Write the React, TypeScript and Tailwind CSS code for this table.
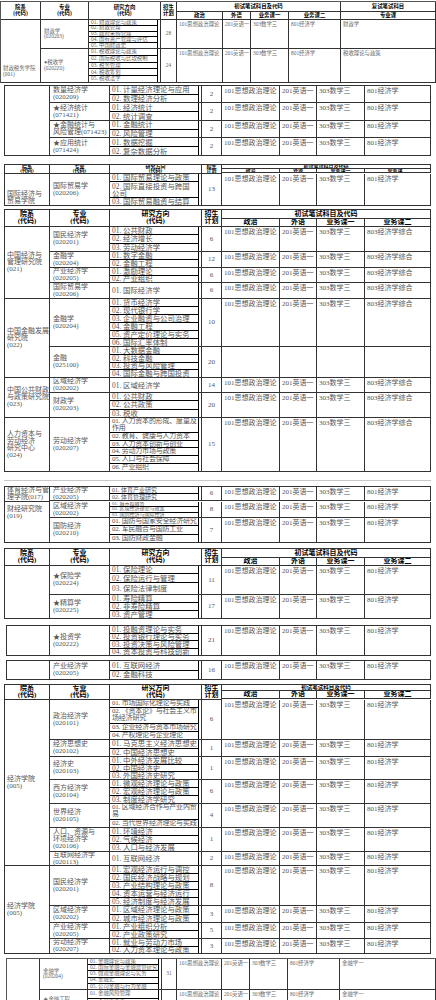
import React from 'react';

type Dir = { t: string; g?: string };
type Spec = { n: string; d: Dir[]; p: string; e: string[]; h: string; dt?: string };
type Group = { dept?: string; da?: string; specs: Spec[] };

const FONT = "font-['Liberation_Serif','Noto_Sans_CJK_SC',serif]";
const B = 'border-[#333]';

// 列宽
const W1 = ['w-[40px]', 'w-[48px]', 'w-[72px]', 'w-[16px]', 'w-[46px]', 'w-[28px]', 'w-[38px]', 'w-[52px]', 'w-[95px]'];
const WM = ['w-[45px]', 'w-[60px]', 'w-[92px]', 'w-[20px]', 'w-[58px]', 'w-[37px]', 'w-[48px]', 'w-[66px]'];
const W10 = ['w-[33px]', 'w-[48px]', 'w-[74px]', 'w-[15px]', 'w-[45px]', 'w-[28px]', 'w-[38px]', 'w-[52px]', 'w-[96px]'];

const HEAD = ['院系\n(代码)', '专业\n(代码)', '研究方向\n(代码)', '招生\n计划'];
const EX3 = ['101思想政治理论', '201英语一', '303数学三', '803经济学综合'];
const EX1 = ['101思想政治理论', '201英语一', '303数学三', '801经济学'];

const d = (...xs: string[]): Dir[] => xs.map((t) => (t.includes('\n') ? { t, g: 'flex-[2]' } : { t }));

const Header = ({ w, h1, h2, txt, t1, extra }: { w: string[]; h1: string; h2: string; txt: string; t1?: string; extra?: boolean }) => {
  const cell = `shrink-0 border-r border-b ${B} flex items-center justify-center text-center overflow-hidden`;
  return (
    <div className={`flex font-bold text-black ${txt}`}>
      {HEAD.map((t, i) => (
        <div key={t} className={`${w[i]} ${cell} whitespace-pre-line`}>{t}</div>
      ))}
      <div className="flex flex-col">
        <div className={`${h1} ${cell} ${t1 ?? ''}`}>初试笔试科目及代码</div>
        <div className={`${h2} flex`}>
          {['政治', '外语', '业务课一', '业务课二'].map((t, i) => (
            <div key={t} className={`${w[4 + i]} ${cell}`}>{t}</div>
          ))}
        </div>
      </div>
      {extra && (
        <div className="flex flex-col">
          <div className={`${h1} ${w[8]} ${cell}`}>复试笔试科目</div>
          <div className={`${h2} ${w[8]} ${cell}`}>专业课</div>
        </div>
      )}
    </div>
  );
};

const Body = ({ w, groups, txt, dirTxt }: { w: string[]; groups: Group[]; txt: string; dirTxt: string }) => (
  <div className={`flex flex-col ${txt}`}>
    {groups.map((g, gi) => (
      <div key={gi} className="flex">
        <div className={`${w[0]} shrink-0 border-r border-b ${B} flex ${g.da ?? 'items-center'} overflow-hidden pl-[2px] whitespace-pre-line`}>
          <span>{g.dept}</span>
        </div>
        <div className="flex flex-col">
          {g.specs.map((s, si) => (
            <div key={si} className={`flex ${s.h}`}>
              <div className={`${w[1]} shrink-0 border-r border-b ${B} flex items-center pl-[3px] whitespace-pre-line overflow-hidden`}>{s.n}</div>
              <div className={`${w[2]} shrink-0 border-r border-b ${B} flex flex-col pr-[2px] ${s.dt ?? dirTxt}`}>
                {s.d.map((x, di) => (
                  <div
                    key={di}
                    className={`${x.g ?? 'flex-1'} min-h-0 flex items-center pl-[2px] whitespace-pre overflow-hidden border-r border-black ${di < s.d.length - 1 ? 'border-b' : ''}`}
                  >
                    {x.t}
                  </div>
                ))}
              </div>
              <div className={`${w[3]} shrink-0 border-r border-b ${B} flex items-center justify-center`}>{s.p}</div>
              {s.e.map((e, ei) => (
                <div key={ei} className={`${w[4 + ei]} shrink-0 border-r border-b ${B} pl-[2px] pt-[2px] whitespace-nowrap overflow-hidden`}>{e}</div>
              ))}
            </div>
          ))}
        </div>
      </div>
    ))}
  </div>
);

const F1: Group[] = [
  {
    dept: '财政税务学院\n(001)',
    da: 'items-end pb-[5px]',
    specs: [
      { n: '财政学\n(020203)', d: d('01. 财政理论与政策', '02. 财政管理', '03. 政府采购管理', '04. 国有资产管理与评估', '05. 中国财政史'), p: '28', e: [...EX1, '财政学'], h: 'h-[29px]' },
      { n: '●税收学\n(0202Z0)', d: d('01. 税收理论与政策', '02. 国际税收与比较税制', '03. 税务管理', '04. 税收筹划', '05. 税收法学'), p: '24', e: [...EX1, '税收理论与政策'], h: 'h-[34px]' },
    ],
  },
];

const F2: Group[] = [
  {
    specs: [
      { n: '数量经济学\n(020209)', d: d('01. 计量经济理论与应用', '02. 数理经济分析'), p: '2', e: EX1, h: 'h-[17px]' },
      { n: '★经济统计\n(071421)', d: d('01. 经济统计', '02. 统计调查'), p: '2', e: EX1, h: 'h-[18px]' },
      { n: '★金融统计与\n风险管理(071423)', d: d('01. 金融统计', '02. 风险管理'), p: '2', e: EX1, h: 'h-[17px]' },
      { n: '★应用统计\n(071424)', d: d('01. 数据挖掘', '02. 复杂数据分析'), p: '2', e: EX1, h: 'h-[18px]' },
    ],
  },
];

const F3: Group[] = [
  {
    dept: '国际经济与\n贸易学院',
    da: 'items-end',
    specs: [
      { n: '国际贸易学\n(020206)', d: d('01. 国际贸易理论与政策', '02. 国际直接投资与跨国\n公司', '03. 国际贸易融资与结算'), p: '13', e: EX1, h: 'h-[32px]' },
    ],
  },
];

const F4: Group[] = [
  {
    dept: '中国经济与\n管理研究院\n(021)',
    specs: [
      { n: '国民经济学\n(020201)', d: d('01. 公共财政', '02. 经济增长', '03. 劳动经济学'), p: '6', e: EX3, h: 'h-[25px]' },
      { n: '金融学\n(020204)', d: d('01. 数字金融', '02. 金融工程'), p: '12', e: EX3, h: 'h-[16px]' },
      { n: '产业经济学\n(020205)', d: d('01. 激励理论', '02. 产业组织'), p: '6', e: EX3, h: 'h-[15px]' },
      { n: '国际贸易学\n(020206)', d: d('01. 国际经济学'), p: '6', e: EX3, h: 'h-[16px]' },
    ],
  },
  {
    dept: '中国金融发展\n研究院\n(022)',
    specs: [
      { n: '金融学\n(020204)', d: d('01. 货币经济学', '02. 现代银行学', '03. 企业融资与公司治理', '04. 金融工程', '05. 资产定价理论与实务', '06. 国际汇率体制'), p: '10', e: EX3, h: 'h-[48px]' },
      { n: '金融\n(025100)', d: d('01. 大数据金融', '02. 科技金融', '03. 投资与风险管理', '04. 国际金融与跨国投资'), p: '20', e: ['', '', '', ''], h: 'h-[31px]' },
    ],
  },
  {
    dept: '中国公共财政\n与政策研究院\n(023)',
    specs: [
      { n: '区域经济学\n(020202)', d: d('01. 区域经济学'), p: '14', e: EX3, h: 'h-[15px]' },
      { n: '财政学\n(020203)', d: d('01. 公共财政', '02. 公共政策', '03. 税收'), p: '20', e: EX3, h: 'h-[25px]' },
    ],
  },
  {
    dept: '人力资本与\n劳动经济\n研究中心\n(024)',
    specs: [
      {
        n: '劳动经济学\n(020207)',
        d: d('01. 人力资本的形成、度量及\n作用', '02. 教育、健康与人力资本', '03. 人力资本创新与创业', '04. 劳动力市场与政策', '05. 人口与社会保障', '06. 产业组织'),
        p: '15',
        e: EX3,
        h: 'h-[54px]',
        dt: 'text-[7px] leading-[7px] tracking-[-0.2px]',
      },
    ],
  },
];

const F5: Group[] = [
  {
    dept: '体育经济与管\n理学院(017)',
    specs: [{ n: '产业经济学\n(020205)', d: d('01. 体育产业研究', '02. 体育管理研究'), p: '6', e: EX1, h: 'h-[14px]', dt: 'text-[6px] leading-[5px]' }],
  },
  {
    dept: '财经研究院\n(019)',
    da: 'items-start pt-[4px]',
    specs: [
      { n: '区域经济学\n(020202)', d: d('01. 城市投融资', '02. 区域经济理论与政策', '03. 国别经济与国际经济'), p: '8', e: EX1, h: 'h-[16px]', dt: 'text-[5px] leading-[4px]' },
      { n: '国防经济\n(020210)', d: d('01. 国防与国家安全经济研究', '02. 军民融合与国防工业', '03. 国防财政金融'), p: '7', e: EX1, h: 'h-[25px]', dt: 'text-[7px] leading-[7px] tracking-[-0.2px]' },
    ],
  },
];

const F6: Group[] = [
  {
    specs: [
      { n: '★保险学\n(020224)', d: [{ t: '01. 保险理论', g: 'flex-[2]' }, { t: '02. 保险运行与管理', g: 'flex-[2]' }, { t: '03. 保险法律制度', g: 'flex-[3]' }], p: '11', e: EX1, h: 'h-[29px]' },
      { n: '★精算学\n(020225)', d: d('01. 寿险精算', '02. 非寿险精算', '03. 资产管理'), p: '17', e: EX1, h: 'h-[24px]' },
    ],
  },
];

const F7: Group[] = [
  {
    specs: [
      { n: '★投资学\n(020222)', d: d('01. 投融资理论与实务', '02. 投资银行理论与实务', '03. 投资决策与风险管理', '04. 资本投资与科技创新'), p: '21', e: EX1, h: 'h-[30px]' },
    ],
  },
];

const F8: Group[] = [
  { specs: [{ n: '产业经济学\n(020205)', d: d('01. 互联网经济', '02. 金融科技'), p: '16', e: EX1, h: 'h-[19px]' }] },
];

const F9: Group[] = [
  {
    dept: '经济学院\n(005)',
    specs: [
      { n: '政治经济学\n(020101)', d: d('01. 市场国际化理论与实践', '02. 《资本论》与社会主义市\n场经济研究', '03. 企业经济与资本市场研究', '04. 产权理论与企业理论'), p: '6', e: EX1, h: 'h-[40px]', dt: 'text-[7px] leading-[7px] tracking-[-0.2px]' },
      { n: '经济思想史\n(020102)', d: d('01. 马克思主义经济思想史', '02. 中国经济思想史'), p: '1', e: EX1, h: 'h-[17px]' },
      { n: '经济史\n(020103)', d: d('01. 中外经济发展比较', '02. 中国经济史', '03. 外国经济史研究'), p: '1', e: EX1, h: 'h-[23px]' },
      { n: '西方经济学\n(020104)', d: d('01. 微观经济理论与政策', '02. 宏观经济理论与政策', '03. 制度经济学研究'), p: '6', e: EX1, h: 'h-[24px]' },
      { n: '世界经济\n(020105)', d: d('01. 区域经济合作与产业内贸\n易', '02. 当代世界经济理论与实践'), p: '4', e: EX1, h: 'h-[24px]', dt: 'text-[7px] leading-[7px] tracking-[-0.2px]' },
      { n: '人口、资源与\n环境经济学\n(020106)', d: d('01. 环境经济', '02. 气候经济', '03. 人口与经济发展'), p: '1', e: EX1, h: 'h-[24px]' },
      { n: '互联网经济学\n(020113)', d: d('01. 互联网经济'), p: '2', e: EX1, h: 'h-[14px]' },
    ],
  },
  {
    dept: '经济学院\n(005)',
    specs: [
      { n: '国民经济学\n(020201)', d: d('01. 宏观经济运行与调控', '02. 国民经济战略与规划', '03. 产业结构理论与政策', '04. 资本运营与经济运行', '05. 经济制度与经济发展'), p: '8', e: EX1, h: 'h-[40px]' },
      { n: '区域经济学\n(020202)', d: d('01. 区域经济理论与政策', '02. 城市经济理论与政策'), p: '3', e: EX1, h: 'h-[17px]' },
      { n: '产业经济学\n(020205)', d: d('01. 产业组织分析', '02. 产业政策研究'), p: '5', e: EX1, h: 'h-[16px]' },
      { n: '劳动经济学\n(020207)', d: d('01. 就业与劳动力市场', '02. 人力资本理论与政策'), p: '3', e: EX1, h: 'h-[15px]' },
    ],
  },
];

const F10: Group[] = [
  {
    specs: [
      { n: '金融学\n(020204)', d: d('01. 金融理论与政策', '02. 国际金融与金融监管研究', '03. 微观金融理论与实务', '04. 金融史', '05. 公司金融与行为金融'), p: '31', e: [...EX1, '金融学一'], h: 'h-[31px]' },
      { n: '★金融工程\n(020208)', d: d('01. 金融风险管理', '02. 金融资产定价', '03. 量化投资'), p: '10', e: [...EX1, '金融学一'], h: 'h-[26px]' },
    ],
  },
];

const MAIN_TXT = 'text-[7px] leading-[7px] text-[#555]';
const DIR_TXT = 'text-[7.4px] leading-[7px]';
const SMALL_TXT = 'text-[5.4px] leading-[5.5px]';

const App: React.FC = () => {
  return (
    <div className={`w-[436px] min-h-[1000px] bg-white overflow-hidden ${FONT}`}>
      {/* 财政税务学院 */}
      <div className="mt-[1px] border-t border-l border-[#555]">
        <Header w={W1} h1="h-[10px]" h2="h-[8px]" txt={SMALL_TXT} extra />
        <Body w={W1} groups={F1} txt={`${SMALL_TXT} text-[#666]`} dirTxt="" />
      </div>

      {/* 统计 */}
      <div className={`mt-[2px] ml-[4px] w-[427px] border-t border-l ${B}`}>
        <Body w={WM} groups={F2} txt={MAIN_TXT} dirTxt={DIR_TXT} />
      </div>

      {/* 国际经济与贸易学院 */}
      <div className={`mt-[8px] ml-[4px] w-[427px] border-t border-l ${B}`}>
        <Header w={WM} h1="h-[4px]" h2="h-[4px]" txt="text-[5px] leading-[4px]" />
        <Body w={WM} groups={F3} txt={MAIN_TXT} dirTxt={DIR_TXT} />
      </div>

      {/* 研究院 */}
      <div className={`mt-[3px] ml-[4px] w-[427px] border-t border-l ${B}`}>
        <Header w={WM} h1="h-[9px]" h2="h-[8px]" txt="text-[7px] leading-[7px]" />
        <Body w={WM} groups={F4} txt={MAIN_TXT} dirTxt={DIR_TXT} />
      </div>

      <div className="mt-[8px] ml-[4px] w-[427px] h-px bg-[#c8c8c8]" />

      {/* 体育 / 财经研究院 */}
      <div className={`mt-[5px] ml-[4px] w-[427px] border-t border-l ${B}`}>
        <Body w={WM} groups={F5} txt={MAIN_TXT} dirTxt={DIR_TXT} />
      </div>

      {/* 保险 */}
      <div className={`mt-[5px] ml-[4px] w-[427px] border-t border-l ${B}`}>
        <Header w={WM} h1="h-[9px]" h2="h-[8px]" txt="text-[7px] leading-[7px]" />
        <Body w={WM} groups={F6} txt={MAIN_TXT} dirTxt={DIR_TXT} />
      </div>

      <div className={`mt-[6px] ml-[6px] w-[425px] border-t border-l ${B}`}>
        <Body w={['w-[43px]', ...WM.slice(1)]} groups={F7} txt={MAIN_TXT} dirTxt={DIR_TXT} />
      </div>

      <div className={`mt-[4px] ml-[6px] w-[425px] border-t border-l ${B}`}>
        <Body w={['w-[43px]', ...WM.slice(1)]} groups={F8} txt={MAIN_TXT} dirTxt={DIR_TXT} />
      </div>

      {/* 经济学院 */}
      <div className={`mt-[4px] ml-[4px] w-[427px] border-t border-l ${B}`}>
        <Header w={WM} h1="h-[6px]" h2="h-[8px]" txt="text-[7px] leading-[7px]" t1="text-[5.5px] leading-[5px]" />
        <Body w={WM} groups={F9} txt={MAIN_TXT} dirTxt={DIR_TXT} />
      </div>

      {/* 金融学院 */}
      <div className="mt-[4px] ml-[6px] border-t border-l border-[#555]">
        <Body w={W10} groups={F10} txt={`${SMALL_TXT} text-[#666]`} dirTxt="" />
      </div>
    </div>
  );
};

export default App;
